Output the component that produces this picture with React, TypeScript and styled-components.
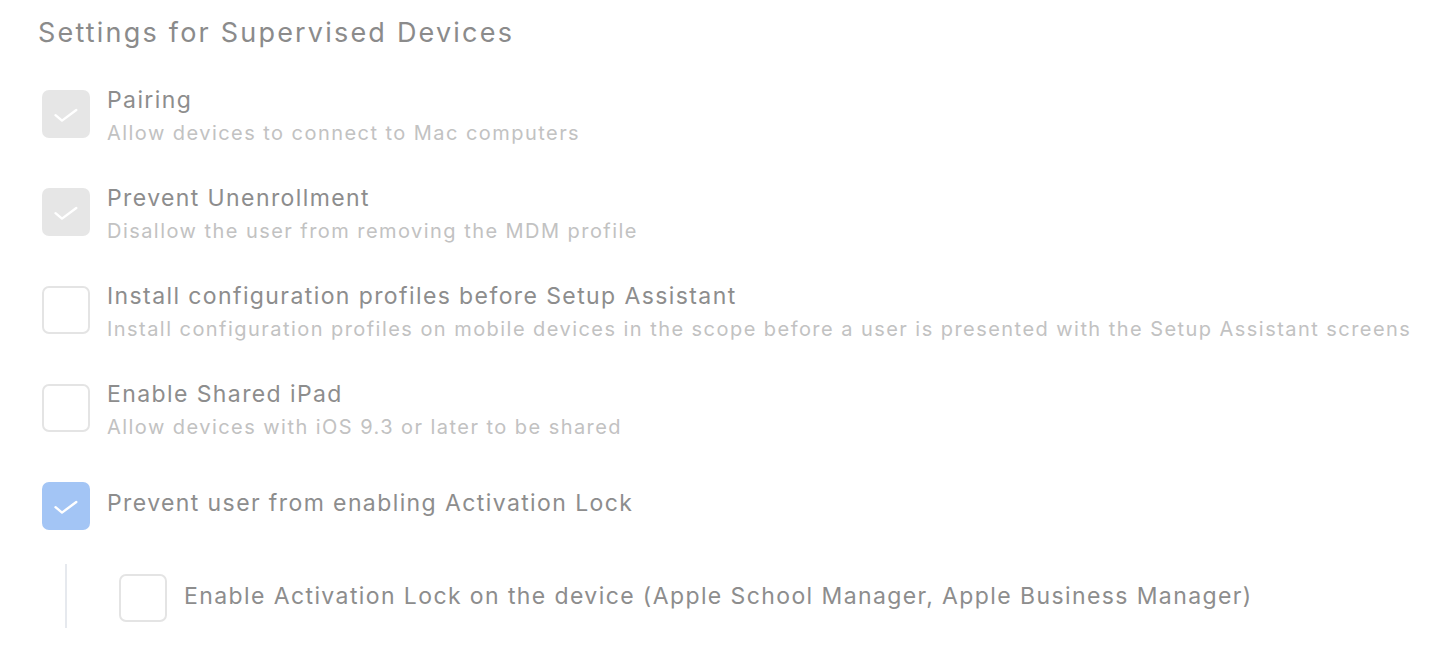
import React from "react";
import styled, { createGlobalStyle } from "styled-components";

const Global = createGlobalStyle`
  html, body { margin: 0; padding: 0; background: #ffffff; }
  body { font-family: Inter, "Open Sans", sans-serif; -webkit-font-smoothing: antialiased; }
`;

const Page = styled.div`
  padding: 17px 0 0 38px;
  width: 1446px;
  height: 652px;
  box-sizing: border-box;
  overflow: hidden;
`;

const Title = styled.h1`
  margin: 0;
  font-size: 27px;
  line-height: 32px;
  font-weight: 400;
  color: #8b8b8b;
  letter-spacing: 2.2px;
  white-space: nowrap;
`;

const List = styled.div`
  display: flex;
  flex-direction: column;
  gap: 50px;
  margin-top: 41px;
  padding-left: 4px;
`;

const Row = styled.div`
  display: flex;
  align-items: flex-start;
  gap: 17px;
  height: 48px;
`;

type BoxState = "disabled" | "checked" | "empty";

const Box = styled.div<{ $state: BoxState }>`
  flex: none;
  width: 48px;
  height: 48px;
  box-sizing: border-box;
  border-radius: 7px;
  display: flex;
  align-items: center;
  justify-content: center;
  background: ${(p) =>
    p.$state === "checked" ? "#a3c5f5" : p.$state === "disabled" ? "#e6e6e6" : "#ffffff"};
  border: ${(p) => (p.$state === "empty" ? "2px solid #e4e4e4" : "none")};
`;

const Texts = styled.div`
  display: flex;
  flex-direction: column;
  margin-top: -4px;
`;

const Label = styled.div<{ $offset?: number }>`
  font-size: 23px;
  line-height: 28px;
  color: #8d8d8d;
  letter-spacing: 1.4px;
  white-space: nowrap;
  margin-top: ${(p) => p.$offset ?? 0}px;
`;

const Sub = styled.div`
  font-size: 20px;
  line-height: 24px;
  margin-top: 7px;
  color: #c2c2c2;
  letter-spacing: 1.45px;
  white-space: nowrap;
`;

const Nested = styled.div`
  display: flex;
  margin-top: -16px;
  padding-left: 23px;
`;

const Rail = styled.div`
  flex: none;
  width: 2px;
  height: 64px;
  background: #e6e9ee;
`;

const NestedRow = styled.div`
  display: flex;
  align-items: flex-start;
  gap: 17px;
  margin: 10px 0 0 52px;
`;

const Check = () => (
  <svg width="48" height="48" viewBox="0 0 48 48" fill="none">
    <path
      d="M13.5 25.2 L20 30.6 L34.3 20"
      stroke="#ffffff"
      strokeWidth="2.4"
      strokeLinecap="round"
      strokeLinejoin="round"
    />
  </svg>
);

type Item = { title: string; sub?: string; state: BoxState };

const items: Item[] = [
  { title: "Pairing", sub: "Allow devices to connect to Mac computers", state: "disabled" },
  { title: "Prevent Unenrollment", sub: "Disallow the user from removing the MDM profile", state: "disabled" },
  {
    title: "Install configuration profiles before Setup Assistant",
    sub: "Install configuration profiles on mobile devices in the scope before a user is presented with the Setup Assistant screens",
    state: "empty",
  },
  { title: "Enable Shared iPad", sub: "Allow devices with iOS 9.3 or later to be shared", state: "empty" },
  { title: "Prevent user from enabling Activation Lock", state: "checked" },
];

export default function App() {
  return (
    <Page>
      <Global />
      <Title>Settings for Supervised Devices</Title>
      <List>
        {items.map((it) => (
          <Row key={it.title}>
            <Box $state={it.state}>{it.state !== "empty" && <Check />}</Box>
            <Texts>
              <Label $offset={it.sub ? 0 : 11}>{it.title}</Label>
              {it.sub && <Sub>{it.sub}</Sub>}
            </Texts>
          </Row>
        ))}
        <Nested>
          <Rail />
          <NestedRow>
            <Box $state="empty" />
            <Label $offset={8}>
              Enable Activation Lock on the device (Apple School Manager, Apple Business Manager)
            </Label>
          </NestedRow>
        </Nested>
      </List>
    </Page>
  );
}
